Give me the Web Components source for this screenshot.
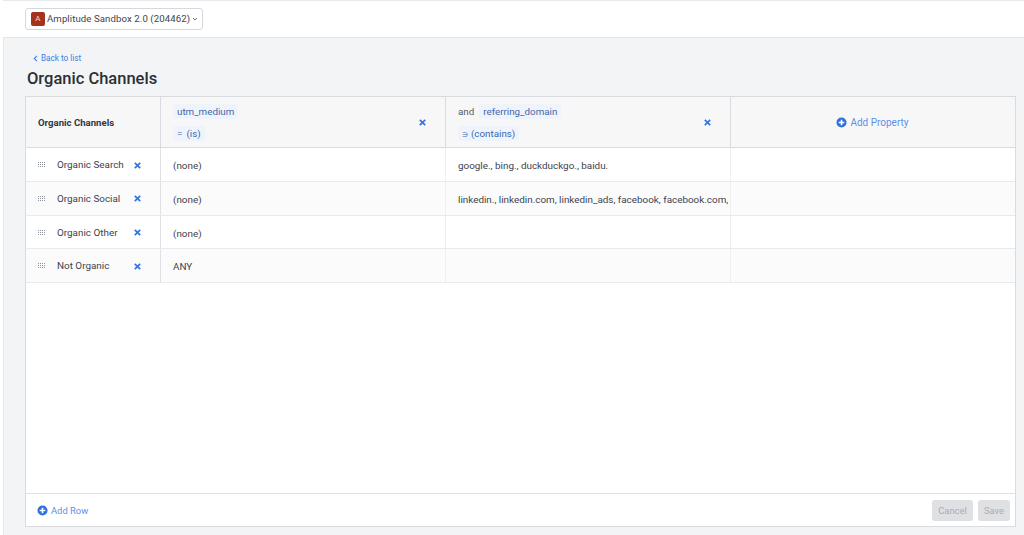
<!DOCTYPE html>
<html>
<head>
<meta charset="utf-8">
<title>Organic Channels</title>
<style>
  html, body { margin: 0; height: 100%; }
  body { width: 1024px; height: 535px; overflow: hidden; background: #f3f4f6; font-family: Roboto, "Liberation Sans", sans-serif; }
</style>
</head>
<body>
<app-shell>
  <top-bar slot="top"></top-bar>
  <page-head></page-head>
  <channel-table>
    <table-head></table-head>
    <channel-row name="Organic Search" a="(none)" b="google., bing., duckduckgo., baidu."></channel-row>
    <channel-row name="Organic Social" a="(none)" b="linkedin., linkedin.com, linkedin_ads, facebook, facebook.com," alt></channel-row>
    <channel-row name="Organic Other" a="(none)" b=""></channel-row>
    <channel-row name="Not Organic" a="ANY" b="" alt></channel-row>
    <table-foot slot="foot"></table-foot>
  </channel-table>
</app-shell>

<script>
const PLUS = `<svg width="11" height="11" viewBox="0 0 11 11" style="flex:none"><circle cx="5.5" cy="5.5" r="5" fill="#2f6fde"/><path d="M5.5 2.7v5.6M2.7 5.5h5.6" stroke="#fff" stroke-width="1.6"/></svg>`;
const CROSS = `<svg width="7" height="7" viewBox="0 0 7 7" style="flex:none"><path d="M.8.8l5.4 5.4M6.2.8L.8 6.2" stroke="#2f76e0" stroke-width="1.7"/></svg>`;
const GRIP = `<svg width="8" height="6" viewBox="0 0 8 6" style="flex:none"><path d="M.5 0v6M2.5 0v6M4.5 0v6M6.5 0v6" stroke="#8d929b" stroke-width="1" stroke-dasharray="1 1"/></svg>`;

class AppShell extends HTMLElement {
  constructor() {
    super();
    this.attachShadow({ mode: 'open' }).innerHTML = `
      <style>
        :host { display: flex; flex-direction: column; width: 1024px; height: 535px; box-sizing: border-box; padding-left: 3px; background: #fff; }
        .inner { flex: 1; display: flex; flex-direction: column; min-height: 0; background: #f3f4f6; border-left: 1px solid #e6e8ec; }
        .content { flex: 1; display: flex; flex-direction: column; min-height: 0; padding: 0 8px 8px 21px; }
      </style>
      <div class="inner">
        <slot name="top"></slot>
        <div class="content"><slot></slot></div>
      </div>`;
  }
}

class TopBar extends HTMLElement {
  constructor() {
    super();
    this.attachShadow({ mode: 'open' }).innerHTML = `
      <style>
        :host { display: flex; align-items: center; height: 38px; box-sizing: border-box; background: #fff; border-top: 1px solid #e8e9ec; border-bottom: 1px solid #e4e6ea; padding: 0 0 1px 22px; margin-left: -1px; }
        .picker { display: flex; align-items: center; height: 22px; box-sizing: border-box; padding: 0 4px 0 5px; gap: 2px; background: #fff; border: 1px solid #d5d8dd; border-radius: 3px; color: #40454e; font-size: 9.65px; letter-spacing: .08px; }
        .logo { width: 14px; height: 14px; border-radius: 2px; background: #a5321c; color: #f2d8d0; font-size: 8px; display: flex; align-items: center; justify-content: center; }
      </style>
      <div class="picker">
        <span class="logo">A</span>
        <span>Amplitude Sandbox 2.0 (204462)</span>
        <svg width="6" height="4" viewBox="0 0 6 4"><path d="M1 1l2 2 2-2" fill="none" stroke="#6b7079" stroke-width="1"/></svg>
      </div>`;
  }
}

class PageHead extends HTMLElement {
  constructor() {
    super();
    this.attachShadow({ mode: 'open' }).innerHTML = `
      <style>
        :host { display: block; height: 58px; box-sizing: border-box; padding-top: 14px; }
        .back { display: flex; align-items: center; gap: 3px; padding-left: 8px; height: 12px; color: #3f7fe4; font-size: 8.2px; }
        h1 { margin: 5px 0 0 2px; font-size: 16.5px; line-height: 20px; font-weight: 500; color: #2b2f36; }
      </style>
      <div class="back">
        <svg width="5" height="7" viewBox="0 0 5 7"><path d="M4 .8L1.2 3.5 4 6.2" fill="none" stroke="#3f7fe4" stroke-width="1.1"/></svg>
        <span>Back to list</span>
      </div>
      <h1>Organic Channels</h1>`;
  }
}

class ChannelTable extends HTMLElement {
  constructor() {
    super();
    this.attachShadow({ mode: 'open' }).innerHTML = `
      <style>
        :host { display: flex; flex-direction: column; height: 431px; box-sizing: border-box; background: #fff; border: 1px solid #d9dbe1; }
        .rows { flex: 1; min-height: 0; }
      </style>
      <div class="rows"><slot></slot></div>
      <slot name="foot"></slot>`;
  }
}

class TableHead extends HTMLElement {
  constructor() {
    super();
    this.attachShadow({ mode: 'open' }).innerHTML = `
      <style>
        :host { display: grid; grid-template-columns: 135px 285px 285px 1fr; height: 51px; box-sizing: border-box; background: #f7f7f8; border-bottom: 1px solid #d9dbe1; font-size: 9.8px; color: #3d424b; }
        .cell { display: flex; align-items: center; box-sizing: border-box; border-right: 1px solid #d9dbe1; min-width: 0; position: relative; }
        .cell:last-child { border-right: 0; }
        .title { padding-left: 12px; font-size: 9.6px; font-weight: 700; color: #33373f; }
        .prop { padding: 0 0 0 12px; justify-content: space-between; }
        .stack { display: flex; flex-direction: column; gap: 7px; }
        .line { display: flex; align-items: center; gap: 5px; color: #555a63; }
        .chip { display: inline-block; height: 15px; line-height: 15px; padding: 0 4px; background: #eff4fc; color: #3e68ad; border-radius: 2px; }
        .x { margin-right: 19px; display: flex; }
        .add { justify-content: center; gap: 3px; padding-right: 1px; color: #5c8fe6; font-size: 10px; }
      </style>
      <div class="cell title">Organic Channels</div>
      <div class="cell prop">
        <div class="stack">
          <div class="line"><span class="chip">utm_medium</span></div>
          <div class="line"><span class="chip"><span style="margin-right:4px">=</span>(is)</span></div>
        </div>
        <span class="x">${CROSS}</span>
      </div>
      <div class="cell prop">
        <div class="stack">
          <div class="line">and <span class="chip">referring_domain</span></div>
          <div class="line"><span class="chip"><span style="margin-right:3px;font-size:7px">∋</span>(contains)</span></div>
        </div>
        <span class="x">${CROSS}</span>
      </div>
      <div class="cell add">${PLUS}<span>Add Property</span></div>`;
  }
}

class ChannelRow extends HTMLElement {
  constructor() {
    super();
    const alt = this.hasAttribute('alt');
    this.attachShadow({ mode: 'open' }).innerHTML = `
      <style>
        :host { display: grid; grid-template-columns: 135px 285px 285px 1fr; height: 33.75px; box-sizing: border-box; background: ${alt ? '#fbfbfc' : '#fff'}; border-bottom: 1px solid #e9eaee; font-size: 9.9px; line-height: 12px; color: #3d424b; }
        .cell { box-sizing: border-box; padding: 12px 0 0 12px; border-right: 1px solid #eeeff2; min-width: 0; overflow: hidden; white-space: nowrap; }
        .cell.lead { border-right: 1px solid #dfe1e6; padding-top: 11px; }
        .head { display: flex; align-items: center; height: 12px; }
        .name { width: 77px; margin-left: 11px; }
        .cell:last-child { border-right: 0; }
      </style>
      <div class="cell lead"><div class="head">${GRIP}<span class="name">${this.getAttribute('name')}</span>${CROSS}</div></div>
      <div class="cell">${this.getAttribute('a')}</div>
      <div class="cell">${this.getAttribute('b')}</div>
      <div class="cell"></div>`;
  }
}

class TableFoot extends HTMLElement {
  constructor() {
    super();
    this.attachShadow({ mode: 'open' }).innerHTML = `
      <style>
        :host { display: flex; align-items: center; justify-content: space-between; height: 33px; box-sizing: border-box; border-top: 1px solid #dfe1e5; padding: 0 5px 0 11px; background: #fff; }
        .add { display: flex; align-items: center; gap: 3px; color: #5c8fe6; font-size: 9.4px; }
        .btns { display: flex; gap: 5px; }
        button { height: 21px; padding: 0; border: 0; border-radius: 3px; background: #dfe0e3; color: #a9acb3; font: inherit; font-size: 9.4px; }
      </style>
      <div class="add">${PLUS}<span>Add Row</span></div>
      <div class="btns">
        <button style="width:41px">Cancel</button>
        <button style="width:32px">Save</button>
      </div>`;
  }
}

customElements.define('app-shell', AppShell);
customElements.define('top-bar', TopBar);
customElements.define('page-head', PageHead);
customElements.define('channel-table', ChannelTable);
customElements.define('table-head', TableHead);
customElements.define('channel-row', ChannelRow);
customElements.define('table-foot', TableFoot);
</script>
</body>
</html>
